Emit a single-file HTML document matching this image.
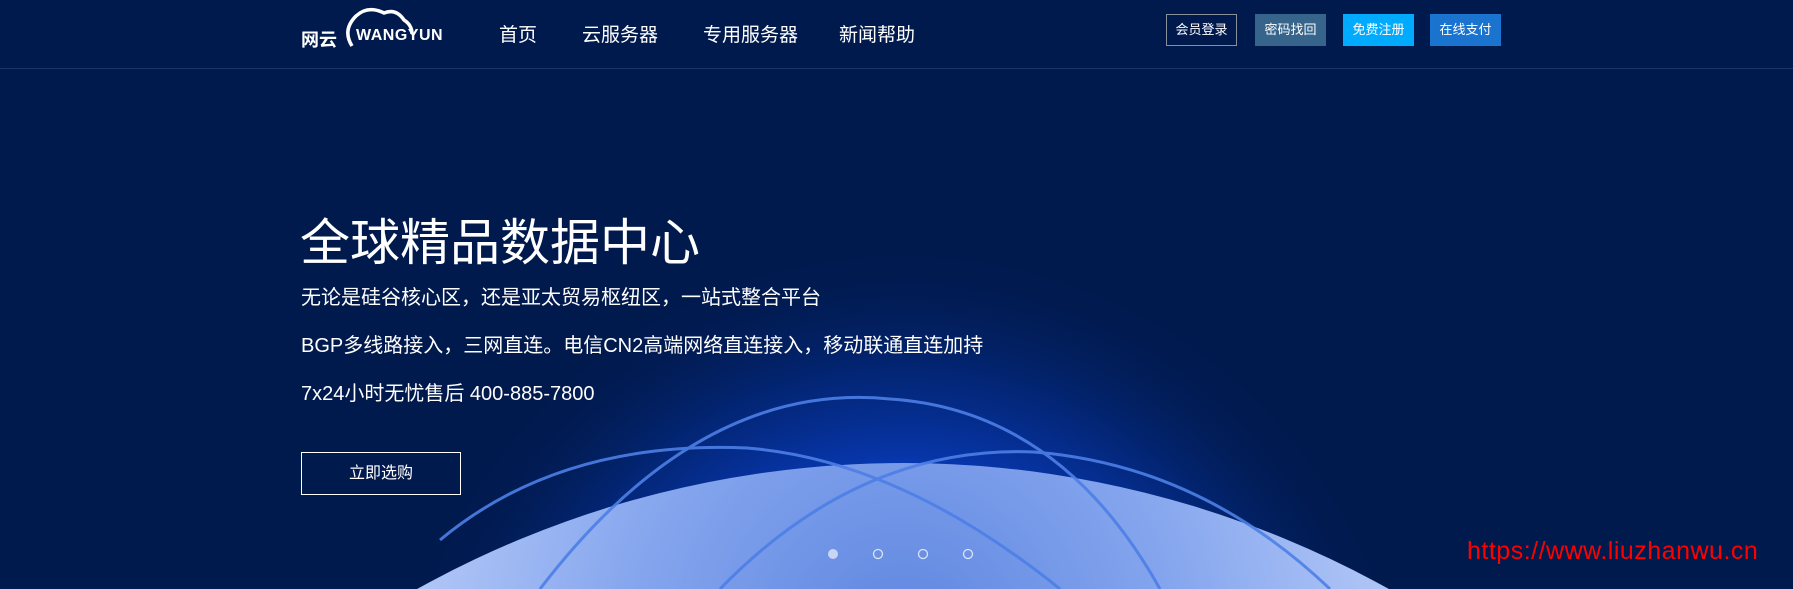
<!DOCTYPE html>
<html><head><meta charset="utf-8"><style>
*{margin:0;padding:0;box-sizing:border-box}
body{width:1793px;height:589px;overflow:hidden;background:#011a4e;font-family:"Liberation Sans","Noto Sans CJK SC",sans-serif;color:#fff;position:relative}
.nav{position:absolute;left:0;top:0;width:1793px;height:69px;border-bottom:1px solid #1c3368}
.nav a{position:absolute;top:20px;font-size:19px;color:#fff}
.btn{position:absolute;top:14px;height:32px;width:71px;font-size:13px;line-height:32px;text-align:center;color:#fff}
.abs{position:absolute;white-space:nowrap}
</style></head><body>
<svg class="abs" style="left:0;top:0" width="1793" height="589">
<defs>
<radialGradient id="glow" cx="903" cy="760" r="520" gradientUnits="userSpaceOnUse">
<stop offset="0" stop-color="#1a5cff"/><stop offset="0.5" stop-color="#0a3fc8"/><stop offset="0.75" stop-color="#03287e" stop-opacity="0.8"/><stop offset="1" stop-color="#011a4e" stop-opacity="0"/></radialGradient>
<radialGradient id="earth" cx="903" cy="640" r="560" gradientUnits="userSpaceOnUse">
<stop offset="0" stop-color="#5e86e0"/><stop offset="0.5" stop-color="#86a6ee"/><stop offset="0.85" stop-color="#aec4f6"/><stop offset="1" stop-color="#c4d4fa"/></radialGradient>
</defs>
<rect x="0" y="70" width="1793" height="519" fill="url(#glow)"/>
<circle cx="903" cy="1463" r="1000" fill="url(#earth)"/>
<g fill="none" stroke="#4d7fe6" stroke-width="3" opacity="0.9">
<path d="M540 589 Q 700 380 890 399 Q 1060 410 1160 589"/>
<path d="M440 540 Q 560 440 747 448 Q 900 460 1060 589"/>
<path d="M720 589 Q 860 445 1034 452 Q 1200 465 1330 589"/>
</g>
<circle cx="833" cy="554" r="5" fill="#c9d6f3"/>
<circle cx="878" cy="554" r="4.5" fill="none" stroke="#dbe4f8" stroke-width="1.3"/>
<circle cx="923" cy="554" r="4.5" fill="none" stroke="#dbe4f8" stroke-width="1.3"/>
<circle cx="968" cy="554" r="4.5" fill="none" stroke="#dbe4f8" stroke-width="1.3"/>
<path d="M352 46 Q 342 30 356 16 Q 368 5 384 13 Q 396 8 404 20 Q 412 25 412 34" fill="none" stroke="#fff" stroke-width="3.5"/>
</svg>
<div class="nav">
<div class="abs" style="left:301px;top:26px;font-size:18px;font-weight:bold">网云</div>
<div class="abs" style="left:356px;top:27px;font-size:16px;font-weight:bold;letter-spacing:0.5px;font-family:'Liberation Sans Narrow','Liberation Sans',sans-serif">WANGYUN</div>
<a style="left:499px">首页</a>
<a style="left:582px">云服务器</a>
<a style="left:703px">专用服务器</a>
<a style="left:839px">新闻帮助</a>
<div class="btn" style="left:1166px;border:1px solid #8a8f99;line-height:30px">会员登录</div>
<div class="btn" style="left:1255px;background:#36648b">密码找回</div>
<div class="btn" style="left:1343px;background:#00aaff">免费注册</div>
<div class="btn" style="left:1430px;background:#1a73cf">在线支付</div>
</div>
<div class="abs" style="left:300px;top:203px;font-size:50px">全球精品数据中心</div>
<div class="abs" style="left:301px;top:281px;font-size:20px">无论是硅谷核心区，还是亚太贸易枢纽区，一站式整合平台</div>
<div class="abs" style="left:301px;top:329px;font-size:20px">BGP多线路接入，三网直连。电信CN2高端网络直连接入，移动联通直连加持</div>
<div class="abs" style="left:301px;top:377px;font-size:20px">7x24小时无忧售后 400-885-7800</div>
<div class="abs" style="left:301px;top:452px;width:160px;height:43px;border:1px solid #fff;font-size:16px;line-height:41px;text-align:center">立即选购</div>
<div class="abs" style="left:1467px;top:537px;font-size:25px;color:#f00;font-family:'Liberation Sans Narrow','Liberation Sans',sans-serif;letter-spacing:0.5px">https://www.liuzhanwu.cn</div>
</body></html>
